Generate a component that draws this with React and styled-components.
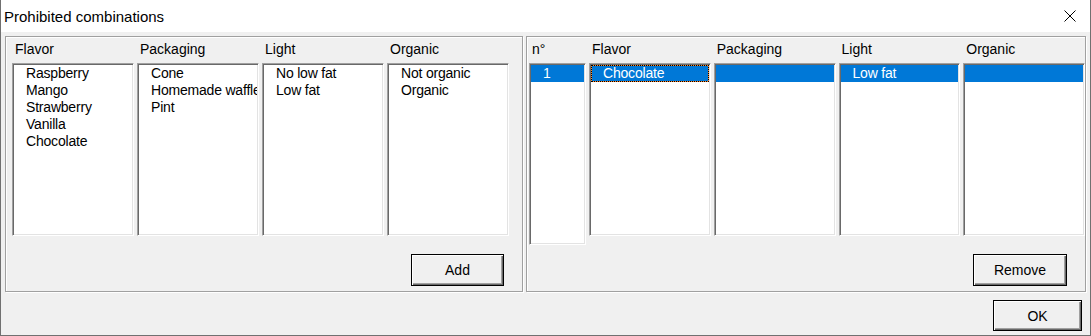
import React from 'react';
import styled, { createGlobalStyle } from 'styled-components';

const GlobalStyle = createGlobalStyle`
    html, body {
        margin: 0;
        padding: 0;
        background: #f0f0f0;
    }
    body {
        font-family: "Liberation Sans", Arial, sans-serif;
        font-size: 14px;
        color: #000;
    }
`;

const StyledWindow = styled.div`
    box-sizing: border-box;
    width: 1091px;
    height: 336px;
    display: flex;
    flex-direction: column;
    background: #f0f0f0;
    border: 1px solid #707070;
    border-top: none;
    overflow: hidden;
`;

const StyledTitleBar = styled.div`
    flex: none;
    height: 32px;
    display: flex;
    align-items: center;
    padding-left: 3px;
    background: #fff;
    font-size: 15px;
`;

const StyledCloseButton = styled.div`
    margin-left: auto;
    width: 40px;
    height: 32px;
    display: flex;
    align-items: center;
    justify-content: center;
`;

const StyledBody = styled.div`
    flex: 1;
    display: flex;
    flex-direction: column;
    padding: 4px 0 0 4px;
`;

const StyledPanelRow = styled.div`
    display: flex;
    gap: 3px;
`;

const StyledPanel = styled.div`
    box-sizing: border-box;
    width: ${p => p.$width}px;
    height: 256px;
    display: flex;
    flex-direction: column;
    border: 1px solid #a0a0a0;
    box-shadow: inset 1px 1px #fff, 1px 1px #fff;
`;

const StyledColumns = styled.div`
    display: flex;
    gap: 3px;
    padding: 4px 0 0 ${p => p.$indent}px;
`;

const StyledColumn = styled.div`
    display: flex;
    flex-direction: column;
    flex: ${p => (p.$width ? 'none' : '1 1 0')};
    width: ${p => (p.$width ? `${p.$width}px` : 'auto')};
    min-width: 0;
`;

const StyledHeader = styled.div`
    height: 17px;
    line-height: 17px;
    padding-left: 3px;
    margin-bottom: 5px;
    white-space: nowrap;
`;

const StyledListBox = styled.div`
    box-sizing: border-box;
    height: ${p => p.$height}px;
    background: #fff;
    border: 1px solid;
    border-color: #a0a0a0 #fff #fff #a0a0a0;
    box-shadow: inset 1px 1px #696969, inset -1px -1px #e3e3e3;
    padding: 1px;
    overflow: hidden;
`;

const StyledItem = styled.div`
    box-sizing: border-box;
    height: 17px;
    line-height: 17px;
    padding-left: 12px;
    letter-spacing: -0.2px;
    white-space: nowrap;
    overflow: hidden;
    background: ${p => (p.$selected ? '#0078d7' : 'transparent')};
    color: ${p => (p.$selected ? '#fff' : '#000')};
    ${p => p.$focused && `
        box-shadow: inset 0 0 0 1px #ff8728;
        outline: 1px dotted #000;
        outline-offset: -1px;
    `}
`;

const StyledButtonRow = styled.div`
    margin-top: auto;
    display: flex;
    justify-content: flex-end;
    padding: 0 ${p => p.$right}px ${p => p.$bottom}px 0;
`;

const StyledButton = styled.button`
    box-sizing: border-box;
    width: ${p => p.$width}px;
    height: ${p => p.$height}px;
    padding: 0;
    font-family: "Liberation Sans", Arial, sans-serif;
    font-size: 14px;
    color: #000;
    background: #f0f0f0;
    border: 1px solid #000;
    box-shadow: inset 1px 1px #fff, inset -1px -1px #696969, inset -2px -2px #a0a0a0;
`;

const StyledFooter = styled.div`
    display: flex;
    justify-content: flex-end;
    padding: 8px 8px 0 0;
`;

const choices = [
    { title: 'Flavor', items: ['Raspberry', 'Mango', 'Strawberry', 'Vanilla', 'Chocolate'] },
    { title: 'Packaging', items: ['Cone', 'Homemade waffle', 'Pint'] },
    { title: 'Light', items: ['No low fat', 'Low fat'] },
    { title: 'Organic', items: ['Not organic', 'Organic'] },
];

const combinations = [
    { title: 'Flavor', value: 'Chocolate', focused: true },
    { title: 'Packaging', value: '' },
    { title: 'Light', value: 'Low fat' },
    { title: 'Organic', value: '' },
];

function CloseIcon() {
    return (
        <svg width="12" height="12" viewBox="0 0 12 12">
            <path d="M0.5 0.5 L11.5 11.5 M11.5 0.5 L0.5 11.5" stroke="#000" strokeWidth="1" fill="none" />
        </svg>
    );
}

function App() {
    return (
        <>
            <GlobalStyle />
            <StyledWindow>
                <StyledTitleBar>
                    Prohibited combinations
                    <StyledCloseButton>
                        <CloseIcon />
                    </StyledCloseButton>
                </StyledTitleBar>
                <StyledBody>
                    <StyledPanelRow>
                        <StyledPanel $width={518}>
                            <StyledColumns $indent={6}>
                                {choices.map(col => (
                                    <StyledColumn key={col.title} $width={122}>
                                        <StyledHeader>{col.title}</StyledHeader>
                                        <StyledListBox $height={173}>
                                            {col.items.map(item => (
                                                <StyledItem key={item}>{item}</StyledItem>
                                            ))}
                                        </StyledListBox>
                                    </StyledColumn>
                                ))}
                            </StyledColumns>
                            <StyledButtonRow $right={18} $bottom={5}>
                                <StyledButton $width={93} $height={32}>Add</StyledButton>
                            </StyledButtonRow>
                        </StyledPanel>
                        <StyledPanel $width={560}>
                            <StyledColumns $indent={2}>
                                <StyledColumn $width={57}>
                                    <StyledHeader>n°</StyledHeader>
                                    <StyledListBox $height={182}>
                                        <StyledItem $selected>1</StyledItem>
                                    </StyledListBox>
                                </StyledColumn>
                                {combinations.map(col => (
                                    <StyledColumn key={col.title}>
                                        <StyledHeader>{col.title}</StyledHeader>
                                        <StyledListBox $height={173}>
                                            <StyledItem $selected $focused={col.focused}>{col.value}</StyledItem>
                                        </StyledListBox>
                                    </StyledColumn>
                                ))}
                            </StyledColumns>
                            <StyledButtonRow $right={18} $bottom={5}>
                                <StyledButton $width={94} $height={32}>Remove</StyledButton>
                            </StyledButtonRow>
                        </StyledPanel>
                    </StyledPanelRow>
                    <StyledFooter>
                        <StyledButton $width={89} $height={31}>OK</StyledButton>
                    </StyledFooter>
                </StyledBody>
            </StyledWindow>
        </>
    );
}

export default App;
